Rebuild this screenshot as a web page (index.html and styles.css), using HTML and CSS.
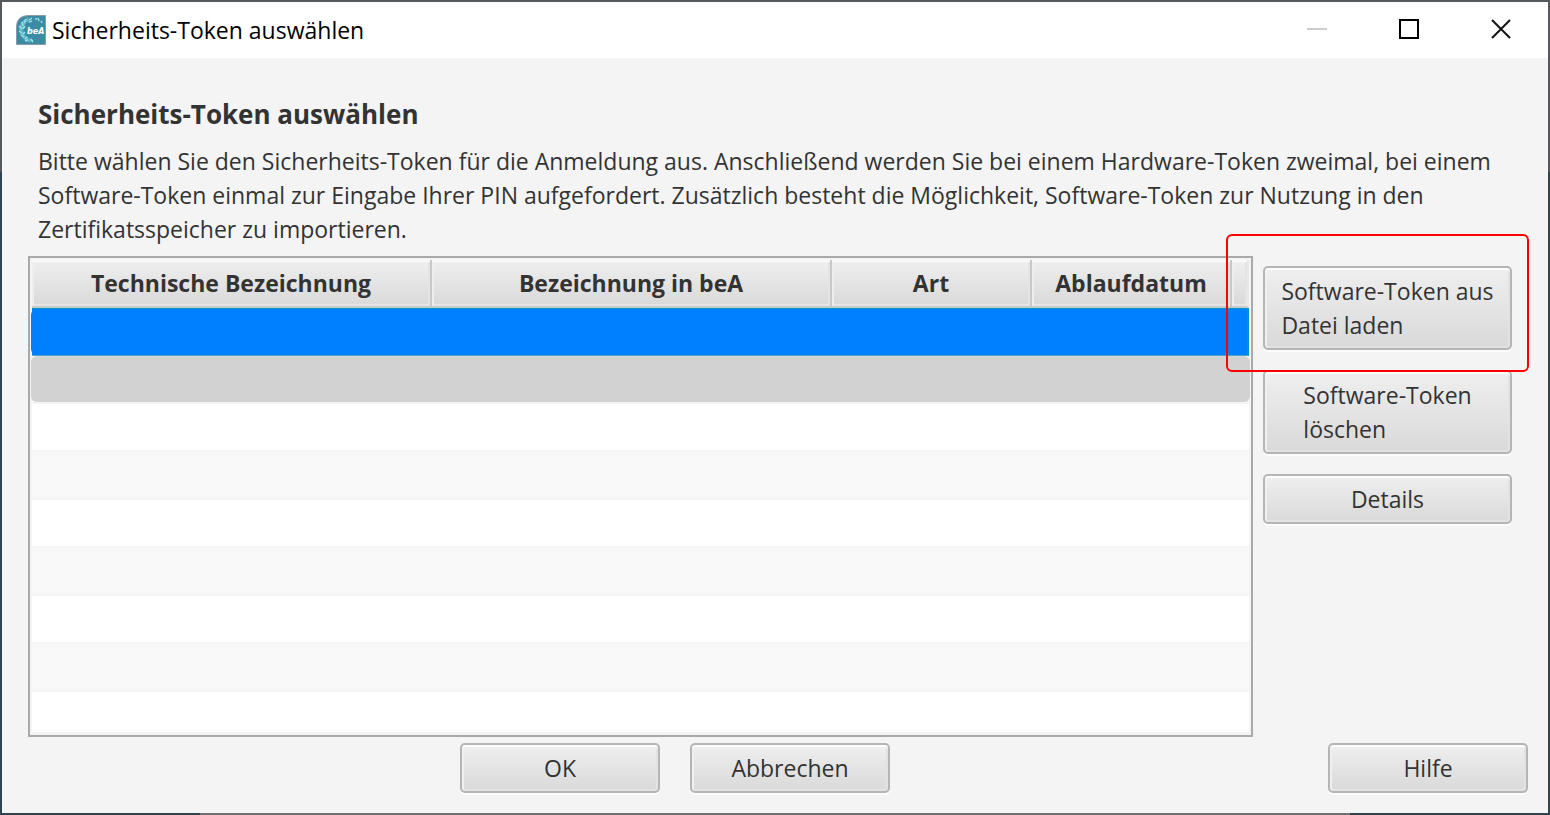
FILE: index.html
```html
<!DOCTYPE html>
<html lang="de">
<head>
    <meta charset="UTF-8">
    <meta name="viewport" content="width=device-width, initial-scale=1.0">
    <title>Sicherheits-Token auswählen</title>
    <link rel="stylesheet" href="styles.css">
</head>
<body>
    <div class="window">
        <!-- Title bar -->
        <header class="title-bar">
            <svg class="app-icon" viewBox="0 0 30 30" aria-hidden="true">
                <path d="M12 0.500H29.500V29.500H0.500V12Q0.500 1 12 0.500Z" fill="#3c8ba3" stroke="#8a9ca3"/>
                <path d="M13 4Q5 8 5 15Q6 23 15 26" fill="none" stroke="#5fb4c6" stroke-width="4"/>
                <path d="M10 4L8 8M6 7L7 11M3 11L6 14M9 11L7 14M3 16L6 18M9 17L7 19M5 20L8 22M11 22L9 24M9 26L12 25M15 24L17 27M13 5L16 3M13 7L16 6M19 4H21M22 3L23 6M25 6L26 8" fill="none" stroke="#9be0e6" stroke-width="1.500"/>
                <text class="app-icon-text" x="11" y="19">beA</text>
            </svg>
            <span class="window-title">Sicherheits-Token auswählen</span>
            <div class="window-controls">
                <button type="button" class="control" aria-label="Minimieren" disabled>
                    <svg viewBox="0 0 20 20"><path d="M0 10H20" stroke="#cccccc" stroke-width="2"/></svg>
                </button>
                <button type="button" class="control" aria-label="Maximieren">
                    <svg viewBox="0 0 20 20"><path d="M1 1H19V19H1Z" fill="none" stroke="#000" stroke-width="2"/></svg>
                </button>
                <button type="button" class="control" aria-label="Schließen">
                    <svg viewBox="0 0 20 20"><path d="M1 1L19 19M19 1L1 19" stroke="#111" stroke-width="2"/></svg>
                </button>
            </div>
        </header>

        <main class="content">
            <div class="intro">
                <h1>Sicherheits-Token auswählen</h1>
                <p>Bitte wählen Sie den Sicherheits-Token für die Anmeldung aus. Anschließend werden Sie bei einem Hardware-Token zweimal, bei einem Software-Token einmal zur Eingabe Ihrer PIN aufgefordert. Zusätzlich besteht die Möglichkeit, Software-Token zur Nutzung in den Zertifikatsspeicher zu importieren.</p>
            </div>

            <div class="token-area">
                <!-- Token list -->
                <div class="table-box">
                    <table>
                        <colgroup>
                            <col class="col-wide">
                            <col class="col-wide">
                            <col class="col-small">
                            <col class="col-small">
                            <col>
                        </colgroup>
                        <thead>
                            <tr>
                                <th>Technische Bezeichnung</th>
                                <th>Bezeichnung in beA</th>
                                <th>Art</th>
                                <th>Ablaufdatum</th>
                                <th></th>
                            </tr>
                        </thead>
                        <tbody>
                            <tr class="selected"><td></td><td></td><td></td><td></td><td></td></tr>
                            <tr class="masked"><td></td><td></td><td></td><td></td><td></td></tr>
                            <tr><td></td><td></td><td></td><td></td><td></td></tr>
                            <tr><td></td><td></td><td></td><td></td><td></td></tr>
                            <tr><td></td><td></td><td></td><td></td><td></td></tr>
                            <tr><td></td><td></td><td></td><td></td><td></td></tr>
                            <tr><td></td><td></td><td></td><td></td><td></td></tr>
                            <tr><td></td><td></td><td></td><td></td><td></td></tr>
                            <tr><td></td><td></td><td></td><td></td><td></td></tr>
                        </tbody>
                    </table>
                </div>

                <!-- Token actions -->
                <div class="side-buttons">
                    <div class="highlight">
                        <button type="button" class="btn"><span>Software-Token aus<br>Datei laden</span></button>
                    </div>
                    <button type="button" class="btn"><span>Software-Token<br>löschen</span></button>
                    <button type="button" class="btn">Details</button>
                </div>
            </div>

            <!-- Dialog buttons -->
            <div class="footer">
                <div class="footer-main">
                    <button type="button" class="btn">OK</button>
                    <button type="button" class="btn">Abbrechen</button>
                </div>
                <button type="button" class="btn">Hilfe</button>
            </div>
        </main>
    </div>
</body>
</html>
```

FILE: styles.css
```css
* {
    box-sizing: border-box;
}
body {
    margin: 0;
    font-family: "Open Sans", "Noto Sans", sans-serif;
    font-size: 23px;
    line-height: 34px;
    color: #333;
}
.window {
    display: flex;
    flex-direction: column;
    height: 100vh;
    padding: 2px;
    background:
        linear-gradient(90deg, #304450 200px, #707070 200px, #707070 1350px, #304450 1350px) bottom / 100% 2px no-repeat,
        linear-gradient(#55585d 172px, #304450 172px);
}

/* Title bar */
.title-bar {
    display: flex;
    align-items: center;
    height: 56px;
    padding-left: 14px;
    background: #fff;
    color: #000;
}
.app-icon {
    width: 30px;
    height: 30px;
    margin-right: 6px;
}
.app-icon-text {
    font: italic bold 8px "DejaVu Sans", sans-serif;
    fill: #fff;
}
.window-title {
    flex: 1;
}
.window-controls {
    display: flex;
    align-self: flex-start;
    padding-right: 1px;
}
.control {
    display: flex;
    align-items: center;
    justify-content: center;
    width: 92px;
    height: 54px;
    padding: 0;
    border: none;
    background: none;
}
.control svg {
    width: 20px;
    height: 20px;
}

/* Content */
.content {
    display: flex;
    flex: 1;
    flex-direction: column;
    min-height: 0;
    padding: 38px 20px 20px 26px;
    background: #f4f4f4;
}
.intro {
    padding: 0 10px;
}
h1 {
    margin: 0 0 12px;
    font-size: 26px;
    font-weight: bold;
    line-height: 36px;
}
p {
    margin: 0 0 10px;
}
.token-area {
    display: flex;
    flex: 1;
    gap: 10px;
    min-height: 0;
    padding-right: 16px;
}

/* Table */
.table-box {
    position: relative;
    flex: 1;
    overflow: hidden;
    padding: 2px;
    border: 2px solid #a9a9a9;
}
.table-box::after {
    content: "";
    position: absolute;
    right: 0;
    bottom: 0;
    left: 0;
    height: 3px;
    background: #f4f4f4;
}
table {
    width: 100%;
    table-layout: fixed;
    border-collapse: separate;
    border-spacing: 0;
}
.col-wide {
    width: 400px;
}
.col-small {
    width: 200px;
}
th {
    height: 48px;
    padding: 0;
    border-right: 2px solid #c8c8c8;
    border-bottom: 2px solid #c8c8c8;
    background: linear-gradient(#efefef, #d9d9d9);
    box-shadow: inset 0 2px #fafafa, inset 2px 0 #eee, inset -2px -2px #e4e4e4;
    font-size: 23px;
}
th:last-child {
    border-right-color: #e8e8e8;
}
td {
    height: 48px;
    padding: 0;
    border-bottom: 2px solid #f4f4f4;
    background: #fff;
}
tr:nth-child(even) td {
    background: #f9f9f9;
}
.selected,
.masked {
    position: relative;
}
.selected td {
    border-top: 1px solid #0096c9;
    border-bottom: 1px solid #4fa9c4;
    background: #0080ff;
}
.selected td:last-child {
    border-right: 2px solid #0096c9;
}
.selected td:first-child::before,
.masked td:first-child::before {
    content: "";
    position: absolute;
    top: 0;
    bottom: 2px;
    left: -1px;
    right: -1px;
    border-radius: 6px;
    background: #d2d2d2;
}
.selected td:first-child::before {
    top: 1px;
    right: 2px;
    bottom: 1px;
    background: #0080ff;
}

/* Buttons */
.side-buttons {
    display: flex;
    flex-direction: column;
    gap: 20px;
    width: 249px;
    padding-top: 10px;
}
.btn {
    display: flex;
    align-items: center;
    justify-content: center;
    width: 200px;
    min-height: 50px;
    padding: 6px;
    border: 2px solid #b5b5b5;
    border-radius: 5px;
    background: linear-gradient(#efefef, #d9d9d9);
    box-shadow: inset 0 2px #fdfdfd, inset 2px 0 #f0f0f0, inset -2px -2px #e2e2e2, 0 2px #fcfcfc;
    color: #333;
    font: inherit;
}
.side-buttons .btn {
    width: 100%;
    text-align: left;
}
.highlight {
    position: relative;
}
.highlight::after {
    content: "";
    position: absolute;
    top: -32px;
    right: -17px;
    bottom: -22px;
    left: -37px;
    border: 2px solid #f00;
    border-radius: 6px;
    pointer-events: none;
}

/* Footer */
.footer {
    display: flex;
    gap: 6px;
    padding-top: 6px;
}
.footer-main {
    display: flex;
    flex: 1;
    justify-content: center;
    gap: 30px;
}
```
